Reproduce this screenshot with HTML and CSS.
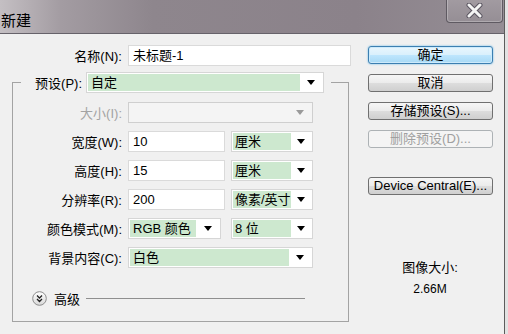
FILE: index.html
```html
<!DOCTYPE html>
<html>
  <head>
    <title>新建</title>
    <link rel="stylesheet" href="styles.css">
  </head>
  <body>
    <div class="window">
      <div class="titlebar">
        <span class="title">新建</span>
        <div class="close">
          <svg width="17" height="15" viewBox="0 0 17 15">
            <path d="M3 2 L14 13 M14 2 L3 13" stroke="#5a5560" stroke-width="5" stroke-linecap="round"/>
            <path d="M3 2 L14 13 M14 2 L3 13" stroke="#f4f4f4" stroke-width="3" stroke-linecap="round"/>
          </svg>
        </div>
      </div>

      <div class="dialog">
        <div class="form">
          <div class="row name-row">
            <label class="lbl">名称(N):</label>
            <div class="textbox name-box">未标题-1</div>
          </div>

          <fieldset class="group">
            <legend>
              <div class="legend-row">
                <label class="lbl preset-lbl">预设(P):</label>
                <div class="select preset"><span class="val">自定</span><span class="arrow"></span></div>
              </div>
            </legend>

            <div class="row">
              <label class="lbl off">大小(I):</label>
              <div class="select full disabled"><span class="val"></span><span class="arrow"></span></div>
            </div>
            <div class="row">
              <label class="lbl">宽度(W):</label>
              <div class="textbox num">10</div>
              <div class="select unit"><span class="val">厘米</span><span class="arrow"></span></div>
            </div>
            <div class="row">
              <label class="lbl">高度(H):</label>
              <div class="textbox num">15</div>
              <div class="select unit"><span class="val">厘米</span><span class="arrow"></span></div>
            </div>
            <div class="row">
              <label class="lbl">分辨率(R):</label>
              <div class="textbox num">200</div>
              <div class="select unit"><span class="val">像素/英寸</span><span class="arrow"></span></div>
            </div>
            <div class="row">
              <label class="lbl">颜色模式(M):</label>
              <div class="select mode"><span class="val">RGB 颜色</span><span class="arrow"></span></div>
              <div class="select unit"><span class="val">8 位</span><span class="arrow"></span></div>
            </div>
            <div class="row">
              <label class="lbl">背景内容(C):</label>
              <div class="select full"><span class="val">白色</span><span class="arrow"></span></div>
            </div>

            <div class="advanced">
              <svg width="15" height="15" viewBox="0 0 15 15">
                <defs>
                  <linearGradient id="knob" x1="0" y1="0" x2="0" y2="1">
                    <stop offset="0" stop-color="#ffffff"/>
                    <stop offset="1" stop-color="#d8d8d8"/>
                  </linearGradient>
                </defs>
                <circle cx="7.5" cy="7.5" r="6.8" fill="url(#knob)" stroke="#8c8c8c"/>
                <path d="M5 4.5 L7.5 7 L10 4.5 M5 8 L7.5 10.5 L10 8" fill="none" stroke="#222" stroke-width="1.3"/>
              </svg>
              <span class="adv-text">高级</span>
              <span class="adv-line"></span>
            </div>
          </fieldset>
        </div>

        <div class="side">
          <div class="btn primary">确定</div>
          <div class="btn">取消</div>
          <div class="btn">存储预设(S)...</div>
          <div class="btn disabled">删除预设(D)...</div>
          <div class="btn device">Device Central(E)...</div>

          <div class="info">
            <div class="info-lbl">图像大小:</div>
            <div class="info-val">2.66M</div>
          </div>
        </div>
      </div>
    </div>
  </body>
</html>
```

FILE: styles.css
```css
* {
  box-sizing: border-box;
}

html {
  background-color: #e2e2e2;
}

body {
  margin: 0;
  font-family: "Liberation Sans", "Noto Sans CJK SC", sans-serif;
  font-size: 13px;
  color: #000;
}

.window {
  width: 505px;
  height: 334px;
  border-right: 1px solid #5c5c5c;
  background-color: #f0f0f0;
  overflow: hidden;
}

/* title bar */
.titlebar {
  height: 34px;
  width: 508px;
  display: flex;
  justify-content: space-between;
  align-items: flex-start;
  border-bottom: 1px solid #66626a;
  background: linear-gradient(90deg, #c4bfc3 0%, #a39ca2 12%, #8e868d 30%, #8b828a 70%, #958e95 100%);
}

.title {
  font-family: "Noto Sans CJK SC", sans-serif;
  font-size: 15px;
  line-height: 15px;
  padding: 12px 0 0 1px;
}

.close {
  width: 57px;
  height: 24px;
  margin-right: 5px;
  margin-top: -1px;
  border: 1px solid #5f5a62;
  border-top: none;
  border-radius: 0 0 4px 4px;
  background: linear-gradient(#a29ba1, #958e95);
  box-shadow: inset 0 0 0 1px rgba(255, 255, 255, 0.25);
  display: flex;
  justify-content: center;
  align-items: center;
}

/* body */
.dialog {
  display: flex;
}

.form {
  width: 368px;
}

.row {
  display: flex;
  align-items: center;
  height: 21px;
  margin-top: 8px;
}

.name-row {
  margin-top: 11px;
}

.lbl {
  width: 125px;
  flex: none;
  text-align: right;
  padding-right: 3px;
  white-space: nowrap;
}

.lbl.off {
  color: #a3a3a3;
}

.textbox {
  height: 21px;
  border: 1px solid #dadada;
  background-color: #fff;
  padding: 0 4px;
  line-height: 19px;
  margin-left: 3px;
}

.name-box {
  width: 223px;
}

.num {
  width: 97px;
}

/* group box */
.group {
  margin: 6px 0 0 12px;
  width: 337px;
  padding: 0 0 15px 8px;
  border: 1px solid #a3a3a3;
}

.group legend {
  padding: 0;
  width: 310px;
}

.legend-row {
  display: flex;
  align-items: center;
  height: 21px;
}

.group .lbl {
  width: 104px;
}

.group .row:first-of-type {
  margin-top: 9px;
}

.group .preset-lbl {
  width: 61px;
  padding-right: 0;
}

/* combo boxes */
.select {
  height: 21px;
  display: flex;
  border: 1px solid #d6d6d6;
  background-color: #fff;
  padding: 1px;
  margin-left: 3px;
}

.select .val {
  flex: 1;
  background-color: #cde8cf;
  padding-left: 3px;
  line-height: 17px;
  white-space: nowrap;
  overflow: hidden;
}

.select .arrow {
  width: 22px;
  display: flex;
  justify-content: center;
  align-items: center;
}

.select .arrow::after {
  content: "";
  border-left: 4.5px solid transparent;
  border-right: 4.5px solid transparent;
  border-top: 5px solid #000;
}

.preset {
  width: 238px;
  margin-left: 4px;
}

.full {
  width: 185px;
}

.unit {
  width: 82px;
  margin-left: 6px;
}

.unit .val {
  padding-left: 2px;
}

.unit .arrow {
  width: 20px;
}

.mode {
  width: 93px;
}

.mode .arrow {
  width: 23px;
}

.mode + .unit {
  margin-left: 10px;
}

.disabled .val {
  background-color: #f4f4f4;
}

.select.disabled {
  border-color: #cfcfcf;
  background-color: #f4f4f4;
}

.select.disabled .arrow::after {
  border-top-color: #9a9a9a;
}

/* advanced */
.advanced {
  display: flex;
  align-items: center;
  margin: 22px 43px 0 11px;
  height: 16px;
}

.adv-text {
  margin-left: 7px;
  font-family: "Noto Sans CJK SC", sans-serif;
}

.adv-line {
  flex: 1;
  height: 1px;
  margin-left: 6px;
  background-color: #8f8f8f;
}

/* right column */
.side {
  width: 125px;
  padding-top: 12px;
}

.btn {
  height: 18px;
  margin-bottom: 10px;
  border: 1px solid #707070;
  border-radius: 3px;
  background: linear-gradient(#f6f6f6 0%, #ebebeb 50%, #dddddd 51%, #cfcfcf 100%);
  text-align: center;
  line-height: 16px;
  white-space: nowrap;
}

.btn.primary {
  border-color: #3c7fb1;
  background: linear-gradient(#e9f6fd 0%, #d9f0fc 50%, #bee6fd 51%, #a7d9f5 100%);
  box-shadow: 0 0 2px #5ab4e8, inset 0 0 0 1px #cdeafb;
}

.btn.disabled {
  border-color: #adb2b5;
  background: #f4f4f4;
  color: #a0a0a0;
}

.btn.device {
  margin-top: 29px;
}

.info {
  margin-top: 62px;
  text-align: center;
  padding-right: 1px;
}

.info-val {
  margin-top: 6px;
  font-size: 12px;
}
```
